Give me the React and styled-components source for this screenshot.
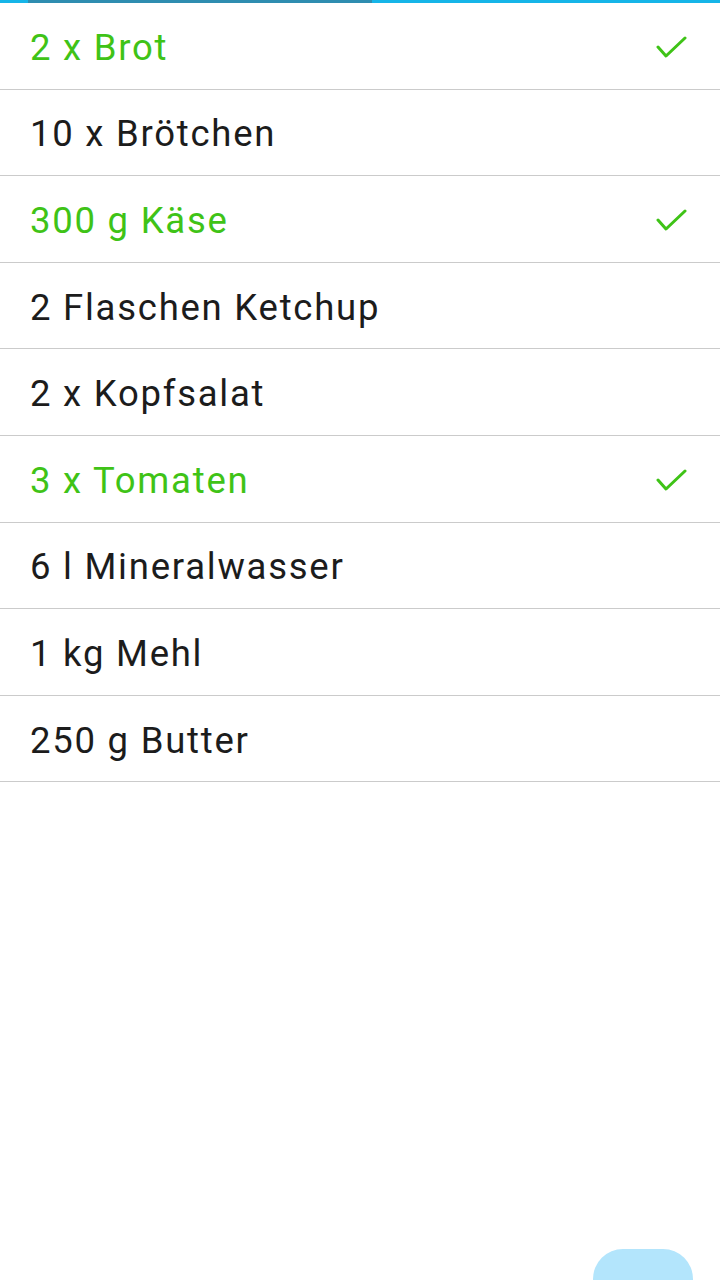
import React from 'react'
import styled, { createGlobalStyle } from 'styled-components'

const items = [
  { label: '2 x Brot', done: true },
  { label: '10 x Brötchen', done: false },
  { label: '300 g Käse', done: true },
  { label: '2 Flaschen Ketchup', done: false },
  { label: '2 x Kopfsalat', done: false },
  { label: '3 x Tomaten', done: true },
  { label: '6 l Mineralwasser', done: false },
  { label: '1 kg Mehl', done: false },
  { label: '250 g Butter', done: false }
]

const GlobalStyle = createGlobalStyle`
  html, body {
    margin: 0;
    padding: 0;
    background: #ffffff;
  }

  body {
    font-family: Roboto, "Noto Sans", sans-serif;
  }
`

const Screen = styled.div`
  position: relative;
  width: 720px;
  height: 1280px;
  overflow: hidden;
  background: #ffffff;
`

const Progress = styled.div`
  height: 3px;
  background: #16b5e8;
  display: flex;
`

const ProgressSegment = styled.div`
  margin-left: 28px;
  width: 344px;
  background: #2f8db0;
`

const List = styled.ul`
  list-style: none;
  margin: 0;
  padding: 0;
`

const Row = styled.li`
  height: 85.6px;
  border-bottom: 1px solid #cbcbcb;
  display: flex;
  align-items: center;
  justify-content: space-between;
  padding: 0 32px 0 30px;
  box-sizing: content-box;
`

const Label = styled.span`
  font-size: 36.5px;
  letter-spacing: 1.75px;
  margin-top: 3px;
  color: ${({ done }) => (done ? '#3fc317' : '#1c1c1c')};
`

const Check = () => (
  <svg width="32" height="26" viewBox="0 0 32 26">
    <polyline
      points="2,11 10,20 29,2"
      fill="none"
      stroke="#3fc317"
      strokeWidth="3"
      strokeLinecap="round"
      strokeLinejoin="round"
    />
  </svg>
)

const CheckWrap = styled.span`
  display: flex;
  margin-top: 6px;
`

const Fab = styled.div`
  position: absolute;
  left: 593px;
  top: 1249px;
  width: 100px;
  height: 80px;
  border-radius: 30px;
  background: #b3e5fc;
`

export default function App() {
  return (
    <Screen>
      <GlobalStyle />
      <Progress>
        <ProgressSegment />
      </Progress>
      <List>
        {items.map(item => (
          <Row key={item.label}>
            <Label done={item.done}>{item.label}</Label>
            {item.done && (
              <CheckWrap>
                <Check />
              </CheckWrap>
            )}
          </Row>
        ))}
      </List>
      <Fab />
    </Screen>
  )
}
